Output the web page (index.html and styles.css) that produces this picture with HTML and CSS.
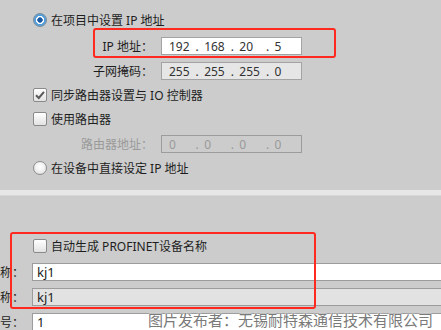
FILE: index.html
```html
<!DOCTYPE html>
<html lang="zh-CN">
<head>
    <meta charset="UTF-8">
    <title>以太网地址</title>
    <link rel="stylesheet" href="styles.css">
</head>
<body>
    <div class="panel">
        <section class="top">
            <div class="row opt">
                <span class="radio on"></span>
                <span>在项目中设置 IP 地址</span>
            </div>
            <div class="row field gap2">
                <label>IP 地址：</label>
                <div class="addr white">
                    <span class="oct">192</span><span class="dot">.</span>
                    <span class="oct">168</span><span class="dot">.</span>
                    <span class="oct">20</span><span class="dot">.</span>
                    <span class="oct">5</span>
                </div>
            </div>
            <div class="row field gap1">
                <label>子网掩码：</label>
                <div class="addr light">
                    <span class="oct">255</span><span class="dot">.</span>
                    <span class="oct">255</span><span class="dot">.</span>
                    <span class="oct">255</span><span class="dot">.</span>
                    <span class="oct">0</span>
                </div>
            </div>
            <div class="row opt">
                <span class="check on">
                    <svg width="12" height="12" viewBox="0 0 12 12"><path d="M2 6.2 L4.8 9 L10 2.8" fill="none" stroke="#5a5a5a" stroke-width="2"/></svg>
                </span>
                <span>同步路由器设置与 IO 控制器</span>
            </div>
            <div class="row opt">
                <span class="check"></span>
                <span>使用路由器</span>
            </div>
            <div class="row field gap1 disabled">
                <label>路由器地址：</label>
                <div class="addr grey">
                    <span class="oct">0</span><span class="dot">.</span>
                    <span class="oct">0</span><span class="dot">.</span>
                    <span class="oct">0</span><span class="dot">.</span>
                    <span class="oct">0</span>
                </div>
            </div>
            <div class="row opt">
                <span class="radio"></span>
                <span>在设备中直接设定 IP 地址</span>
            </div>
        </section>

        <div class="stripe"></div>

        <section class="bottom">
            <div class="row opt">
                <span class="check"></span>
                <span>自动生成 PROFINET设备名称</span>
            </div>
            <div class="name-row">
                <label>称：</label>
                <div class="text-box white">kj1</div>
            </div>
            <div class="name-row">
                <label>称：</label>
                <div class="text-box light">kj1</div>
            </div>
            <div class="name-row">
                <label>号：</label>
                <div class="text-box white">1</div>
            </div>
        </section>
    </div>

    <!-- red highlight frames -->
    <div class="mark mark-ip"></div>
    <div class="mark mark-name"></div>

    <div class="watermark">图片发布者：无锡耐特森通信技术有限公司</div>
</body>
</html>
```

FILE: styles.css
```css
body {
    margin: 0;
    width: 441px;
    height: 330px;
    overflow: hidden;
    position: relative;
    background: #cccccc;
    font-family: "Noto Sans", "Noto Sans CJK SC", sans-serif;
    font-size: 12px;
    color: #1e1e1e;
}
.panel {
    width: 441px;
}
.top {
    padding: 8px 0 10px 33px;
    height: 172px;
}
.row {
    height: 24px;
    display: flex;
    align-items: center;
}
.gap1 {
    margin-top: 1px;
}
.gap2 {
    margin-top: 2px;
}
.opt {
    gap: 4px;
}

/* radio buttons */
.radio {
    width: 14px;
    height: 14px;
    box-sizing: border-box;
    border: 1px solid #8c8c8c;
    border-radius: 50%;
    background: radial-gradient(circle at 50% 40%, #ffffff 0, #f2f2f2 45%, #d6d6d6 100%);
    flex: none;
}
.radio.on {
    border-color: #7a8a99;
    background: radial-gradient(circle, #1b5aa3 0 2.4px, #ffffff 3px 3.8px, #4e9ad8 4.4px, #6fb3e6 100%);
}

/* check boxes */
.check {
    width: 14px;
    height: 14px;
    box-sizing: border-box;
    border: 1px solid #8a8a8a;
    border-radius: 2px;
    background: linear-gradient(#ffffff, #e2e2e2);
    flex: none;
    display: flex;
    align-items: center;
    justify-content: center;
}

/* address fields */
.field label {
    width: 120px;
    text-align: right;
    margin-right: 8px;
    white-space: nowrap;
}
.disabled label {
    color: #9a9a9a;
}
.addr {
    width: 141px;
    height: 18px;
    box-sizing: border-box;
    border: 1px solid #a3a3a3;
    padding-left: 7px;
    display: flex;
    align-items: center;
    color: #333;
    font-size: 12px;
}
.addr.white {
    background: #ffffff;
}
.addr.light {
    background: #e6e6e6;
}
.addr.grey {
    background: #cccccc;
    border-color: #9c9c9c;
    color: #9a9a9a;
}
.oct {
    width: 28px;
}
.dot {
    width: 9px;
}

.stripe {
    height: 6px;
    background: #e7e7e7;
    border-bottom: 1px solid #d8d8d8;
    box-sizing: border-box;
}

/* device name section */
.bottom {
    padding: 38px 0 0 33px;
}
.name-row {
    display: flex;
    align-items: center;
    margin-left: -33px;
    margin-top: 7px;
}
.bottom .opt + .name-row {
    margin-top: 5px;
}
.name-row label {
    width: 24px;
    margin-right: 8px;
    white-space: nowrap;
}
.text-box {
    flex: 1;
    height: 18px;
    box-sizing: border-box;
    border: 1px solid #9c9c9c;
    border-right: none;
    padding-left: 4px;
    line-height: 16px;
    font-size: 13px;
    color: #222;
}
.text-box.white {
    background: #ffffff;
}
.text-box.light {
    background: #e2e2e2;
}

.mark {
    position: absolute;
    border: 2.5px solid #ff2a1f;
    border-radius: 3px;
    box-sizing: border-box;
}
.mark-ip {
    left: 93px;
    top: 28px;
    width: 243px;
    height: 30px;
}
.mark-name {
    left: 10px;
    top: 232px;
    width: 306px;
    height: 77px;
}

.watermark {
    position: absolute;
    right: 8px;
    bottom: 0;
    font-size: 15px;
    line-height: 20px;
    color: #7a7a7a;
    text-shadow: 0 0 2px #ffffff, 0 0 2px #ffffff;
    white-space: nowrap;
}
```
